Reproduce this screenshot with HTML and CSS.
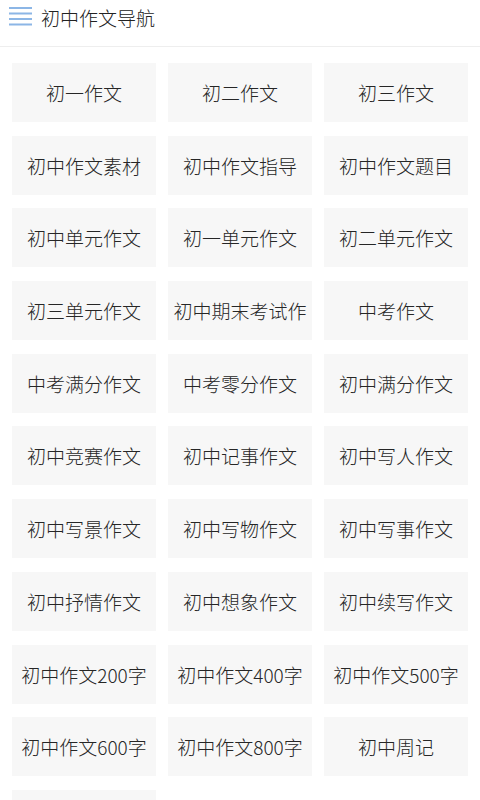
FILE: index.html
```html
<!DOCTYPE html>
<html lang="zh-CN">
<head>
  <meta charset="UTF-8" />
  <meta name="viewport" content="width=device-width, initial-scale=1.0" />
  <title>初中作文导航</title>
  <link rel="stylesheet" href="styles.css">
</head>
<body>
  <header class="topbar">
    <svg class="menu-icon" width="24" height="20" viewBox="0 0 24 20">
      <rect x="0" y="0" width="23" height="2" />
      <rect x="0" y="5.5" width="23" height="2" />
      <rect x="0" y="11" width="23" height="2" />
      <rect x="0" y="16.5" width="23" height="2" />
    </svg>
    <h1>初中作文导航</h1>
  </header>

  <nav class="nav-grid" id="navGrid"></nav>

  <script>
    const categories = [
      "初一作文", "初二作文", "初三作文",
      "初中作文素材", "初中作文指导", "初中作文题目",
      "初中单元作文", "初一单元作文", "初二单元作文",
      "初三单元作文", "初中期末考试作", "中考作文",
      "中考满分作文", "中考零分作文", "初中满分作文",
      "初中竞赛作文", "初中记事作文", "初中写人作文",
      "初中写景作文", "初中写物作文", "初中写事作文",
      "初中抒情作文", "初中想象作文", "初中续写作文",
      "初中作文200字", "初中作文400字", "初中作文500字",
      "初中作文600字", "初中作文800字", "初中周记",
      ""
    ];

    const grid = document.getElementById("navGrid");

    categories.forEach(name => {
      const link = document.createElement("a");
      link.className = "nav-item";
      link.href = "#";
      link.textContent = name;
      grid.appendChild(link);
    });
  </script>
</body>
</html>
```

FILE: styles.css
```css
* {
  box-sizing: border-box;
}

body {
  margin: 0;
  background: #fff;
  font-family: "Noto Sans CJK SC", "Noto Sans", sans-serif;
  color: #222;
}

.topbar {
  display: flex;
  align-items: center;
  height: 47px;
  padding: 0 0 12px 9px;
  border-bottom: 1px solid #eeeeee;
}

.menu-icon {
  fill: #8cb6e6;
}

.topbar h1 {
  margin: 0 0 0 8px;
  font-size: 19px;
  font-weight: 300;
  color: #222;
}

.nav-grid {
  display: grid;
  grid-template-columns: repeat(3, 144px);
  grid-auto-rows: 59px;
  column-gap: 12px;
  row-gap: 13.7px;
  padding: 16px 12px;
}

.nav-item {
  display: flex;
  align-items: center;
  justify-content: center;
  background: #f7f7f7;
  color: #262626;
  font-size: 19px;
  font-weight: 300;
  text-decoration: none;
  white-space: nowrap;
  overflow: hidden;
}
```
